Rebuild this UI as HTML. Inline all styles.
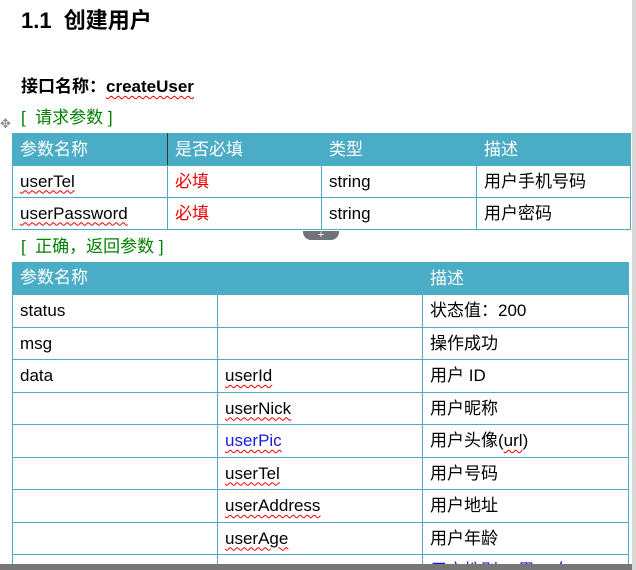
<!DOCTYPE html>
<html style="margin:0;width:636px;height:570px;overflow:hidden"><head><meta charset="utf-8"><style>
body{margin:0;width:636px;height:570px;overflow:hidden;background:#fff;position:relative;font-family:"Liberation Sans","Noto Sans CJK SC",sans-serif;color:#000}
.a{position:absolute;white-space:nowrap;line-height:22px}
table{position:absolute;border-collapse:collapse;font-size:17px;table-layout:fixed}
td{border:1px solid #4BACC6;padding:0 0 0 7px;line-height:20px;vertical-align:middle;overflow:hidden;white-space:nowrap}
tr.h td{background:#4BACC6;color:#fff;border-color:#4BACC6}
.w{text-decoration:underline wavy #e00;text-decoration-thickness:1px;text-underline-offset:3px}
.r{color:#e00}.b{color:#1a1adb}
</style></head><body>
<div class="a" style="left:21px;top:10px;font-size:22px;font-weight:bold">1.1&nbsp; 创建用户</div>
<div class="a" style="left:21px;top:76px;font-size:17px;font-weight:bold">接口名称：<span class="w">createUser</span></div>
<div class="a" style="left:21px;top:107px;font-size:17px;color:#008000">[&nbsp; 请求参数 ]</div>
<div class="a" style="left:0;top:113px;font-size:13px;color:#888">✥</div>
<table style="left:12px;top:133px;width:619px">
<col style="width:155px"><col style="width:154px"><col style="width:155px"><col>
<tr class="h" style="height:32px"><td style="border-right:1px solid #333">参数名称</td><td>是否必填</td><td>类型</td><td>描述</td></tr>
<tr style="height:32px"><td><span class="w">userTel</span></td><td class="r">必填</td><td>string</td><td>用户手机号码</td></tr>
<tr style="height:32px"><td><span class="w">userPassword</span></td><td class="r">必填</td><td>string</td><td>用户密码</td></tr>
</table>
<div class="a" style="left:303px;top:231px;width:36px;height:9px;background:#6e7479;border-radius:0 0 8px 8px;color:#fff;font-size:11px;line-height:9px;text-align:center">+</div>
<div class="a" style="left:21px;top:236px;font-size:17px;color:#008000">[&nbsp; 正确，返回参数 ]</div>
<table style="left:12px;top:262px;width:617px">
<col style="width:205px"><col style="width:205px"><col>
<tr class="h" style="height:32px"><td></td><td></td><td>描述</td></tr>
<tr style="height:33px"><td>status</td><td></td><td>状态值：200</td></tr>
<tr style="height:32px"><td>msg</td><td></td><td>操作成功</td></tr>
<tr style="height:33px"><td>data</td><td><span class="w">userId</span></td><td>用户 ID</td></tr>
<tr style="height:32px"><td></td><td><span class="w">userNick</span></td><td>用户昵称</td></tr>
<tr style="height:33px"><td></td><td class="b"><span class="w">userPic</span></td><td>用户头像(<span class="w">url</span>)</td></tr>
<tr style="height:32px"><td></td><td><span class="w">userTel</span></td><td>用户号码</td></tr>
<tr style="height:33px"><td></td><td><span class="w">userAddress</span></td><td>用户地址</td></tr>
<tr style="height:32px"><td></td><td><span class="w">userAge</span></td><td>用户年龄</td></tr>
<tr style="height:32px"><td></td><td>userSex</td><td class="b">用户性别(1 男 2 女)</td></tr>
</table>
<div class="a" style="left:20px;top:267px;font-size:17px;color:#fff">参数名称</div>
<div class="a" style="left:0;top:564px;width:636px;height:6px;background:#777"></div>
<div class="a" style="left:632px;top:0;width:4px;height:570px;background:#d8d8d8"></div>
</body></html>
